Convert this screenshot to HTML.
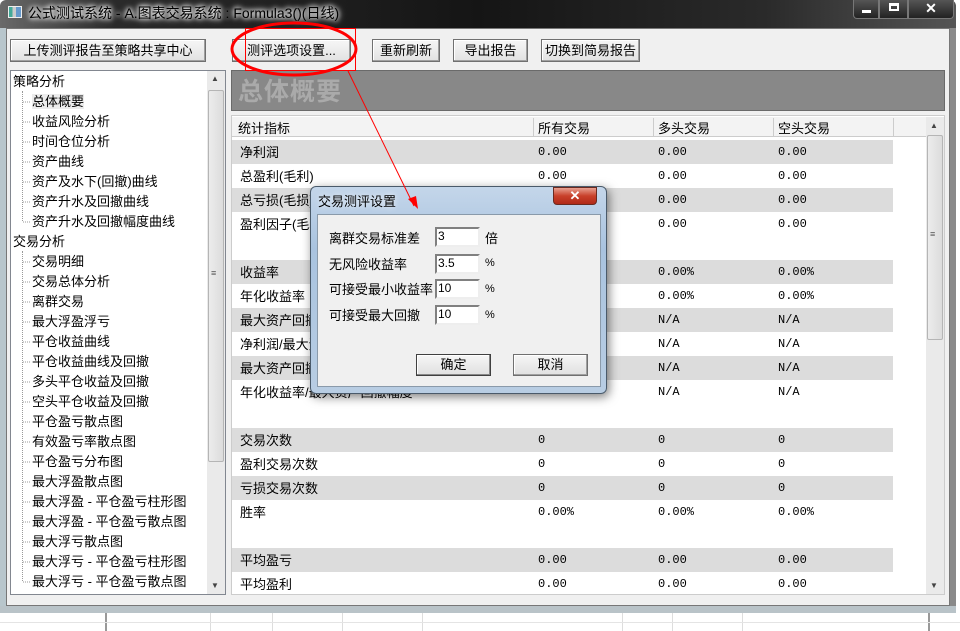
<!DOCTYPE html>
<html><head><meta charset="utf-8"><style>
*{margin:0;padding:0;box-sizing:border-box}
body{width:960px;height:631px;position:relative;overflow:hidden;background:#fff;font-family:"Liberation Sans","Noto Sans CJK SC",sans-serif;font-size:13px;color:#000}
.abs{position:absolute}
.btn{position:absolute;top:39px;height:23px;background:linear-gradient(#f6f6f6,#e2e2e2);border:1px solid #707070;box-shadow:inset -1px -1px 0 #a0a0a0,inset 1px 1px 0 #fff;text-align:center;line-height:21px;font-size:13px}
.tree div{position:absolute;left:0;height:20px;line-height:20px;white-space:nowrap}
.tree div.s{left:0}
.row{position:absolute;left:232px;width:661px;height:24px}
.g{background:#dcdcdc}
.cell{position:absolute;top:2px;font-size:13px;white-space:nowrap}
.num{font-family:"Liberation Mono",monospace;font-size:12px;top:5px}
</style></head><body>
<div class="abs" style="left:0;top:612px;width:960px;height:19px;background:#fff"></div>
<div class="abs" style="left:105px;top:612px;width:2px;height:19px;background:#999"></div>
<div class="abs" style="left:210px;top:612px;width:1px;height:19px;background:#ddd"></div>
<div class="abs" style="left:272px;top:612px;width:1px;height:19px;background:#ddd"></div>
<div class="abs" style="left:342px;top:612px;width:1px;height:19px;background:#ddd"></div>
<div class="abs" style="left:422px;top:612px;width:1px;height:19px;background:#ddd"></div>
<div class="abs" style="left:622px;top:612px;width:1px;height:19px;background:#ddd"></div>
<div class="abs" style="left:672px;top:612px;width:1px;height:19px;background:#ddd"></div>
<div class="abs" style="left:742px;top:612px;width:1px;height:19px;background:#ddd"></div>
<div class="abs" style="left:928px;top:612px;width:2px;height:19px;background:#999"></div>
<div class="abs" style="left:0;top:622px;width:960px;height:1px;background:#e4e4e4"></div>
<div class="abs" style="left:0;top:0;width:956px;height:613px;background:linear-gradient(90deg,#6a6a6a 0%,#2a2a2a 12%,#151515 50%,#2a2a2a 80%,#555 100%);border-radius:6px 6px 0 0"></div>
<div class="abs" style="left:0;top:28px;width:6px;height:585px;background:#b8c6cc"></div>
<div class="abs" style="left:950px;top:28px;width:6px;height:585px;background:#8a8a8a"></div>
<div class="abs" style="left:0;top:606px;width:956px;height:7px;background:#b9c3c8"></div>
<div class="abs" style="left:8px;top:6px;width:14px;height:12px;background:linear-gradient(90deg,#4a9 0,#4a9 30%,#ccc 30%,#ccc 60%,#69c 60%);border:1px solid #eee"></div>
<div class="abs" style="left:28px;top:3px;color:#000;font-size:14px;text-shadow:0 0 8px #fff,0 0 6px #fff,0 0 4px #fff">公式测试系统 - A.图表交易系统 : Formula3()(日线)</div>
<div class="abs" style="left:853px;top:0;width:26px;height:19px;border:1px solid #777;border-top:0;background:linear-gradient(#555,#222);border-radius:0 0 0 4px"><div class="abs" style="left:8px;top:10px;width:9px;height:3px;background:#fff"></div></div>
<div class="abs" style="left:879px;top:0;width:29px;height:19px;border:1px solid #777;border-top:0;background:linear-gradient(#555,#222)"><div class="abs" style="left:9px;top:3px;width:10px;height:8px;border:2px solid #fff;border-top-width:3px"></div></div>
<div class="abs" style="left:908px;top:0;width:46px;height:19px;border:1px solid #777;border-top:0;background:linear-gradient(#555,#222);border-radius:0 0 4px 0;color:#fff;text-align:center;font-weight:bold;font-size:14px;line-height:17px">✕</div>
<div class="abs" style="left:6px;top:28px;width:944px;height:578px;background:#f0f0f0;border:1px solid #777"></div>
<div class="btn" style="left:10px;width:196px">上传测评报告至策略共享中心</div>
<div class="btn" style="left:232px;width:119px">测评选项设置...</div>
<div class="btn" style="left:372px;width:68px">重新刷新</div>
<div class="btn" style="left:453px;width:75px">导出报告</div>
<div class="btn" style="left:541px;width:99px">切换到简易报告</div>
<div class="abs" style="left:10px;top:70px;width:216px;height:525px;background:#fff;border:1px solid #828790"></div>
<div class="abs" style="left:207px;top:71px;width:18px;height:523px;background:#eaeaea"></div>
<div class="abs" style="left:208px;top:90px;width:16px;height:372px;background:linear-gradient(90deg,#ececec,#dcdcdc);border:1px solid #b5b5b5;border-radius:2px"></div>
<div class="abs" style="left:211px;top:268px;font-size:9px;color:#555">≡</div>
<div class="abs" style="left:211px;top:74px;font-size:8px;color:#444">▲</div>
<div class="abs" style="left:211px;top:581px;font-size:8px;color:#444">▼</div>
<div class="abs" style="left:22px;top:91px;width:0;height:130px;border-left:1px dotted #999"></div>
<div class="abs" style="left:22px;top:251px;width:0;height:330px;border-left:1px dotted #999"></div>
<div class="tree abs" style="left:13px;top:72px;width:190px">
<div style="top:0">策略分析</div>
<div style="top:20px;left:19px"><span style="background:#ececec">总体概要</span></div>
<div style="top:40px;left:19px">收益风险分析</div>
<div style="top:60px;left:19px">时间仓位分析</div>
<div style="top:80px;left:19px">资产曲线</div>
<div style="top:100px;left:19px">资产及水下(回撤)曲线</div>
<div style="top:120px;left:19px">资产升水及回撤曲线</div>
<div style="top:140px;left:19px">资产升水及回撤幅度曲线</div>
<div style="top:160px">交易分析</div>
<div style="top:180px;left:19px">交易明细</div>
<div style="top:200px;left:19px">交易总体分析</div>
<div style="top:220px;left:19px">离群交易</div>
<div style="top:240px;left:19px">最大浮盈浮亏</div>
<div style="top:260px;left:19px">平仓收益曲线</div>
<div style="top:280px;left:19px">平仓收益曲线及回撤</div>
<div style="top:300px;left:19px">多头平仓收益及回撤</div>
<div style="top:320px;left:19px">空头平仓收益及回撤</div>
<div style="top:340px;left:19px">平仓盈亏散点图</div>
<div style="top:360px;left:19px">有效盈亏率散点图</div>
<div style="top:380px;left:19px">平仓盈亏分布图</div>
<div style="top:400px;left:19px">最大浮盈散点图</div>
<div style="top:420px;left:19px">最大浮盈 - 平仓盈亏柱形图</div>
<div style="top:440px;left:19px">最大浮盈 - 平仓盈亏散点图</div>
<div style="top:460px;left:19px">最大浮亏散点图</div>
<div style="top:480px;left:19px">最大浮亏 - 平仓盈亏柱形图</div>
<div style="top:500px;left:19px">最大浮亏 - 平仓盈亏散点图</div>
</div>
<svg class="abs" style="left:0;top:0" width="960" height="631">
<g stroke="#999" stroke-dasharray="1,1">
<line x1="23" y1="102" x2="31" y2="102"/><line x1="23" y1="122" x2="31" y2="122"/><line x1="23" y1="142" x2="31" y2="142"/><line x1="23" y1="162" x2="31" y2="162"/><line x1="23" y1="182" x2="31" y2="182"/><line x1="23" y1="202" x2="31" y2="202"/><line x1="23" y1="222" x2="31" y2="222"/>
<line x1="23" y1="262" x2="31" y2="262"/><line x1="23" y1="282" x2="31" y2="282"/><line x1="23" y1="302" x2="31" y2="302"/><line x1="23" y1="322" x2="31" y2="322"/><line x1="23" y1="342" x2="31" y2="342"/><line x1="23" y1="362" x2="31" y2="362"/><line x1="23" y1="382" x2="31" y2="382"/><line x1="23" y1="402" x2="31" y2="402"/><line x1="23" y1="422" x2="31" y2="422"/><line x1="23" y1="442" x2="31" y2="442"/><line x1="23" y1="462" x2="31" y2="462"/><line x1="23" y1="482" x2="31" y2="482"/><line x1="23" y1="502" x2="31" y2="502"/><line x1="23" y1="522" x2="31" y2="522"/><line x1="23" y1="542" x2="31" y2="542"/><line x1="23" y1="562" x2="31" y2="562"/><line x1="23" y1="582" x2="31" y2="582"/>
</g></svg>
<div class="abs" style="left:231px;top:70px;width:714px;height:41px;background:#888;border:1px solid #6a6a6a"></div>
<div class="abs" style="left:238px;top:72px;font-size:25px;font-weight:bold;color:#aaa;letter-spacing:1px">总体概要</div>
<div class="abs" style="left:231px;top:115px;width:714px;height:480px;background:#fff;border:1px solid #ccc"></div>
<div class="abs" style="left:232px;top:117px;width:694px;height:20px;background:#f3f3f3;border-bottom:1px solid #ccc"></div>
<div class="abs" style="left:238px;top:118px">统计指标</div>
<div class="abs" style="left:538px;top:118px">所有交易</div>
<div class="abs" style="left:658px;top:118px">多头交易</div>
<div class="abs" style="left:778px;top:118px">空头交易</div>
<div class="abs" style="left:533px;top:118px;width:1px;height:18px;background:#ccc"></div>
<div class="abs" style="left:653px;top:118px;width:1px;height:18px;background:#ccc"></div>
<div class="abs" style="left:773px;top:118px;width:1px;height:18px;background:#ccc"></div>
<div class="abs" style="left:893px;top:118px;width:1px;height:18px;background:#ccc"></div>
<div class="abs" style="left:926px;top:117px;width:18px;height:477px;background:#eaeaea"></div>
<div class="abs" style="left:927px;top:135px;width:16px;height:205px;background:linear-gradient(90deg,#ececec,#dcdcdc);border:1px solid #b5b5b5;border-radius:2px"></div>
<div class="abs" style="left:930px;top:229px;font-size:9px;color:#555">≡</div>
<div class="abs" style="left:930px;top:121px;font-size:8px;color:#444">▲</div>
<div class="abs" style="left:930px;top:581px;font-size:8px;color:#444">▼</div>

<div class="row g" style="top:140px"><span class="cell" style="left:8px">净利润</span><span class="cell num" style="left:306px">0.00</span><span class="cell num" style="left:426px">0.00</span><span class="cell num" style="left:546px">0.00</span></div>
<div class="row" style="top:164px"><span class="cell" style="left:8px">总盈利(毛利)</span><span class="cell num" style="left:306px">0.00</span><span class="cell num" style="left:426px">0.00</span><span class="cell num" style="left:546px">0.00</span></div>
<div class="row g" style="top:188px"><span class="cell" style="left:8px">总亏损(毛损)</span><span class="cell num" style="left:426px">0.00</span><span class="cell num" style="left:546px">0.00</span></div>
<div class="row" style="top:212px"><span class="cell" style="left:8px">盈利因子(毛利/毛损)</span><span class="cell num" style="left:426px">0.00</span><span class="cell num" style="left:546px">0.00</span></div>
<div class="row g" style="top:260px"><span class="cell" style="left:8px">收益率</span><span class="cell num" style="left:426px">0.00%</span><span class="cell num" style="left:546px">0.00%</span></div>
<div class="row" style="top:284px"><span class="cell" style="left:8px">年化收益率</span><span class="cell num" style="left:426px">0.00%</span><span class="cell num" style="left:546px">0.00%</span></div>
<div class="row g" style="top:308px"><span class="cell" style="left:8px">最大资产回撤</span><span class="cell num" style="left:426px">N/A</span><span class="cell num" style="left:546px">N/A</span></div>
<div class="row" style="top:332px"><span class="cell" style="left:8px">净利润/最大资产回撤</span><span class="cell num" style="left:426px">N/A</span><span class="cell num" style="left:546px">N/A</span></div>
<div class="row g" style="top:356px"><span class="cell" style="left:8px">最大资产回撤幅度</span><span class="cell num" style="left:426px">N/A</span><span class="cell num" style="left:546px">N/A</span></div>
<div class="row" style="top:380px"><span class="cell" style="left:8px">年化收益率/最大资产回撤幅度</span><span class="cell num" style="left:426px">N/A</span><span class="cell num" style="left:546px">N/A</span></div>
<div class="row g" style="top:428px"><span class="cell" style="left:8px">交易次数</span><span class="cell num" style="left:306px">0</span><span class="cell num" style="left:426px">0</span><span class="cell num" style="left:546px">0</span></div>
<div class="row" style="top:452px"><span class="cell" style="left:8px">盈利交易次数</span><span class="cell num" style="left:306px">0</span><span class="cell num" style="left:426px">0</span><span class="cell num" style="left:546px">0</span></div>
<div class="row g" style="top:476px"><span class="cell" style="left:8px">亏损交易次数</span><span class="cell num" style="left:306px">0</span><span class="cell num" style="left:426px">0</span><span class="cell num" style="left:546px">0</span></div>
<div class="row" style="top:500px"><span class="cell" style="left:8px">胜率</span><span class="cell num" style="left:306px">0.00%</span><span class="cell num" style="left:426px">0.00%</span><span class="cell num" style="left:546px">0.00%</span></div>
<div class="row g" style="top:548px"><span class="cell" style="left:8px">平均盈亏</span><span class="cell num" style="left:306px">0.00</span><span class="cell num" style="left:426px">0.00</span><span class="cell num" style="left:546px">0.00</span></div>
<div class="row" style="top:572px"><span class="cell" style="left:8px">平均盈利</span><span class="cell num" style="left:306px">0.00</span><span class="cell num" style="left:426px">0.00</span><span class="cell num" style="left:546px">0.00</span></div>

<div class="abs" style="left:310px;top:186px;width:297px;height:208px;background:linear-gradient(#c4d6ea,#a9c3df 30%,#b8cde3);border:1px solid #4a5a6a;border-radius:6px;box-shadow:2px 3px 10px rgba(0,0,0,.5)"></div>
<div class="abs" style="left:318px;top:191px;font-size:13px;color:#000;text-shadow:0 0 6px #fff">交易测评设置</div>
<div class="abs" style="left:553px;top:187px;width:44px;height:18px;background:linear-gradient(#e8a090,#c8402a 50%,#b02a18);border:1px solid #6a2a20;border-radius:0 0 4px 4px;color:#fff;text-align:center;font-weight:bold;font-size:13px;line-height:16px">✕</div>
<div class="abs" style="left:317px;top:214px;width:284px;height:173px;background:#f0f0f0;border:1px solid #8a9aaa"></div>
<div class="abs" style="left:329px;top:228px">离群交易标准差</div>
<div class="abs" style="left:329px;top:254px">无风险收益率</div>
<div class="abs" style="left:329px;top:279px">可接受最小收益率</div>
<div class="abs" style="left:329px;top:305px">可接受最大回撤</div>
<div class="abs" style="left:435px;top:227px;width:45px;height:20px;background:#fff;border:2px solid #808080;border-right-color:#eee;border-bottom-color:#eee;font-size:12px;padding-left:1px;line-height:15px">3</div>
<div class="abs" style="left:435px;top:254px;width:45px;height:20px;background:#fff;border:2px solid #808080;border-right-color:#eee;border-bottom-color:#eee;font-size:12px;padding-left:1px;line-height:15px">3.5</div>
<div class="abs" style="left:435px;top:279px;width:45px;height:20px;background:#fff;border:2px solid #808080;border-right-color:#eee;border-bottom-color:#eee;font-size:12px;padding-left:1px;line-height:15px">10</div>
<div class="abs" style="left:435px;top:305px;width:45px;height:20px;background:#fff;border:2px solid #808080;border-right-color:#eee;border-bottom-color:#eee;font-size:12px;padding-left:1px;line-height:15px">10</div>
<div class="abs" style="left:485px;top:228px">倍</div>
<div class="abs" style="left:485px;top:257px;font-size:11px">%</div>
<div class="abs" style="left:485px;top:283px;font-size:11px">%</div>
<div class="abs" style="left:485px;top:309px;font-size:11px">%</div>
<div class="abs" style="left:416px;top:354px;width:75px;height:22px;background:linear-gradient(#f6f6f6,#e0e0e0);border:1px solid #404040;box-shadow:inset -1px -1px 0 #888,inset 1px 1px 0 #fff;text-align:center;line-height:20px">确定</div>
<div class="abs" style="left:513px;top:354px;width:75px;height:22px;background:linear-gradient(#f6f6f6,#e0e0e0);border:1px solid #707070;box-shadow:inset -1px -1px 0 #a0a0a0,inset 1px 1px 0 #fff;text-align:center;line-height:20px">取消</div>

<svg class="abs" style="left:0;top:0" width="960" height="631">
<rect x="245.5" y="28.5" width="110" height="42" fill="none" stroke="#f00" stroke-width="1"/>
<ellipse cx="294" cy="49" rx="62" ry="26" fill="none" stroke="#f00" stroke-width="3"/>
<line x1="348" y1="71" x2="414" y2="206" stroke="#f00" stroke-width="1"/>
<polygon points="418,209 408,199 416,196" fill="#f00"/>
</svg>
</body></html>
